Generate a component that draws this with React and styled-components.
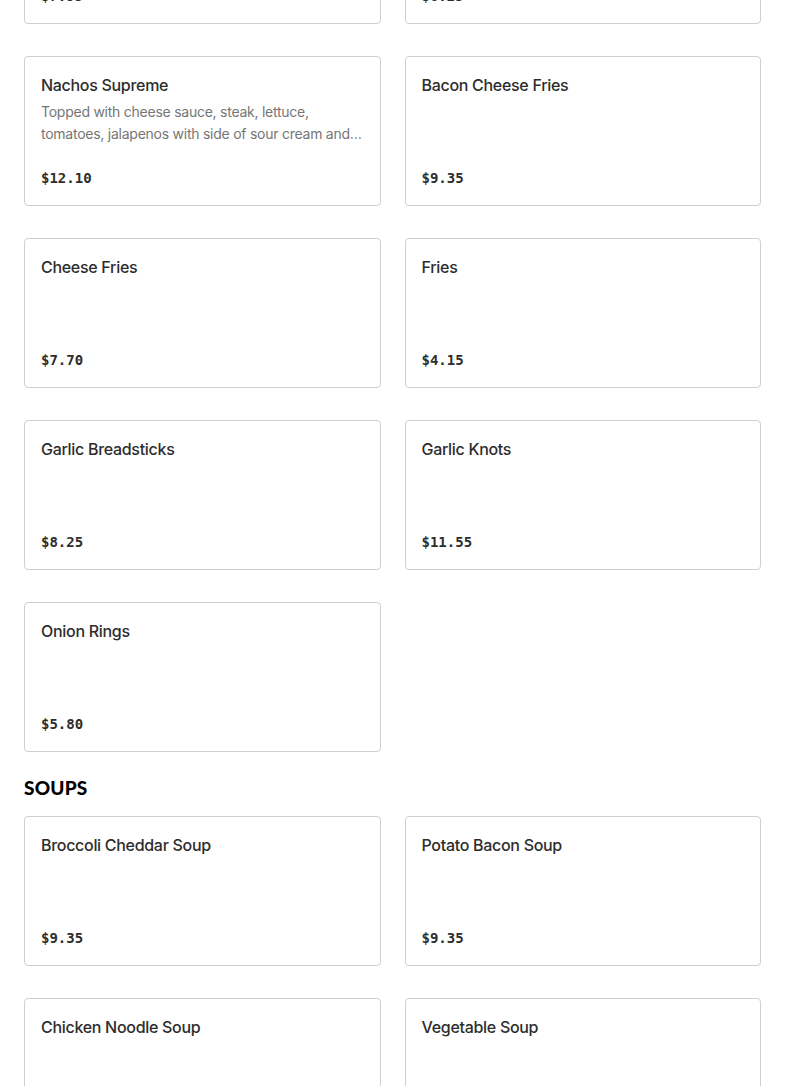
import React from "react";
import styled, { createGlobalStyle } from "styled-components";

const GlobalStyle = createGlobalStyle`
  html, body {
    margin: 0;
    padding: 0;
    background: #ffffff;
    overflow: hidden;
  }
  body {
    font-family: Inter, "Noto Sans", sans-serif;
    color: #2d2d2d;
  }
`;

// page is shown scrolled down, first row sits mostly above the fold
const Page = styled.div`
  padding: 0 24px;
  margin-top: -126px;
`;

const Section = styled.section`
  margin-bottom: 24px;
`;

const SectionTitle = styled.h2`
  margin: 0 0 16px;
  font-family: Lato, Inter, sans-serif;
  font-weight: 900;
  font-size: 19px;
  line-height: 24px;
  color: #000000;
  text-transform: uppercase;
  letter-spacing: 0.2px;
`;

const Grid = styled.div`
  display: grid;
  grid-template-columns: 1fr 1fr;
  column-gap: 24px;
  row-gap: 32px;
`;

const Card = styled.div`
  box-sizing: border-box;
  height: 150px;
  border: 1px solid #cfcfcf;
  border-radius: 4px;
  padding: 16px;
  display: flex;
  flex-direction: column;
  background: #fff;
`;

const Name = styled.div`
  font-size: 16px;
  font-weight: 500;
  line-height: 24px;
  letter-spacing: -0.3px;
  color: #2d2d2d;
`;

const Desc = styled.div`
  margin-top: 4px;
  font-size: 14px;
  line-height: 22px;
  letter-spacing: -0.25px;
  color: #767676;
  display: -webkit-box;
  -webkit-line-clamp: 2;
  -webkit-box-orient: vertical;
  overflow: hidden;
`;

const Price = styled.div`
  margin-top: auto;
  font-family: "DejaVu Sans Mono", "Liberation Mono", monospace;
  font-weight: bold;
  font-size: 14px;
  line-height: 22px;
  color: #2d2d2d;
`;

const sides = [
  { name: "Mozzarella Sticks", price: "$7.95" },
  { name: "Jalapeno Poppers", price: "$6.25" },
  {
    name: "Nachos Supreme",
    desc: "Topped with cheese sauce, steak, lettuce, tomatoes, jalapenos with side of sour cream and salsa",
    price: "$12.10",
  },
  { name: "Bacon Cheese Fries", price: "$9.35" },
  { name: "Cheese Fries", price: "$7.70" },
  { name: "Fries", price: "$4.15" },
  { name: "Garlic Breadsticks", price: "$8.25" },
  { name: "Garlic Knots", price: "$11.55" },
  { name: "Onion Rings", price: "$5.80" },
];

const soups = [
  { name: "Broccoli Cheddar Soup", price: "$9.35" },
  { name: "Potato Bacon Soup", price: "$9.35" },
  { name: "Chicken Noodle Soup", price: "$7.70" },
  { name: "Vegetable Soup", price: "$7.70" },
];

const ItemCard = ({ item }) => (
  <Card>
    <Name>{item.name}</Name>
    {item.desc && <Desc>{item.desc}</Desc>}
    <Price>{item.price}</Price>
  </Card>
);

const App = () => {
  return (
    <>
      <GlobalStyle />
      <Page>
        <Section>
          <Grid>
            {sides.map((s) => (
              <ItemCard key={s.name} item={s} />
            ))}
          </Grid>
        </Section>
        <Section>
          <SectionTitle>Soups</SectionTitle>
          <Grid>
            {soups.map((s) => (
              <ItemCard key={s.name} item={s} />
            ))}
          </Grid>
        </Section>
      </Page>
    </>
  );
};

export default App;
